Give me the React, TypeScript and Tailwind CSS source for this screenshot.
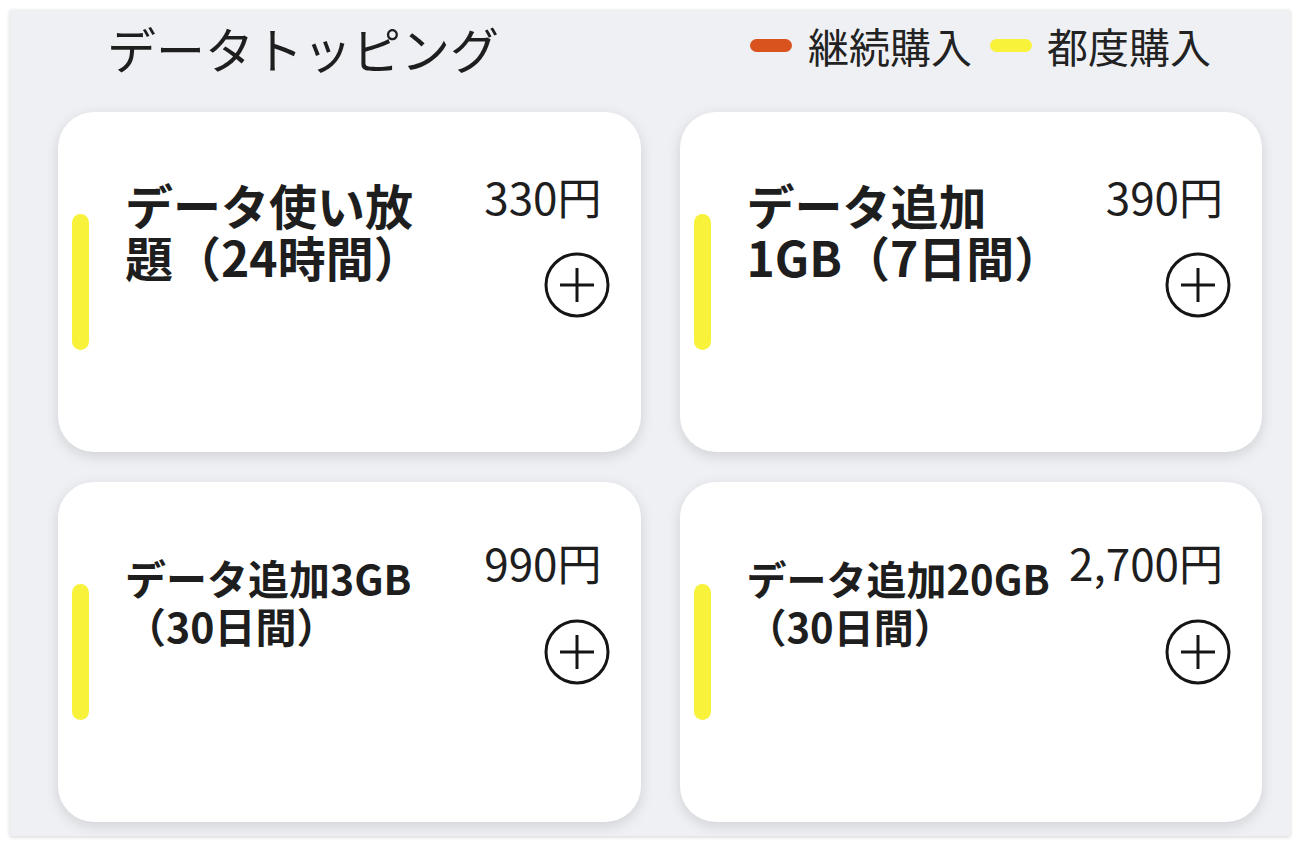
import React from "react";

type Topping = {
  lines: string[];
  price: string;
  size: "lg" | "sm";
  tight?: boolean;
};

const toppings: Topping[] = [
  { lines: ["データ使い放", "題（24時間）"], price: "330円", size: "lg" },
  { lines: ["データ追加", "1GB（7日間）"], price: "390円", size: "lg" },
  { lines: ["データ追加3GB", "（30日間）"], price: "990円", size: "sm" },
  { lines: ["データ追加20GB", "（30日間）"], price: "2,700円", size: "sm", tight: true },
];

function PlusCircle() {
  return (
    <svg width="66" height="66" viewBox="0 0 66 66" fill="none" stroke="#151515" strokeWidth="3">
      <circle cx="33" cy="33" r="31" />
      <line x1="16" y1="33" x2="50" y2="33" />
      <line x1="33" y1="16" x2="33" y2="50" />
    </svg>
  );
}

function ToppingCard({ item }: { item: Topping }) {
  const lg = item.size === "lg";
  let titleCls = "ml-[36px] flex-1 mt-[7px] text-[48px] leading-[52px] font-bold text-[#1e1e1e] whitespace-nowrap";
  if (!lg) {
    titleCls = item.tight
      ? "ml-[36px] flex-1 mt-[13px] text-[40px] leading-[48px] font-bold text-[#1e1e1e] whitespace-nowrap"
      : "ml-[36px] flex-1 mt-[12px] text-[41px] leading-[48px] font-bold text-[#1e1e1e] whitespace-nowrap";
  }
  return (
    <div className="flex items-start h-[340px] rounded-[36px] bg-white shadow-[0_4px_14px_rgba(0,0,0,0.13)] pl-[14px] pr-[31px] pt-[59px]">
      <div className="mt-[43px] w-[17px] h-[136px] rounded-full bg-[#f8f23a] shrink-0" />
      <p className={titleCls}>
        {item.lines[0]}
        <br />
        {item.lines[1]}
      </p>
      <div className={lg ? "flex flex-col items-end mt-[1px]" : "flex flex-col items-end mt-[-3px]"}>
        <div className="mr-[8px] text-[44px] leading-[48px] text-[#1e1e1e]">{item.price}</div>
        <div className={lg ? "mt-[32px]" : "mt-[33px]"}>
          <PlusCircle />
        </div>
      </div>
    </div>
  );
}

export default function App() {
  return (
    <div className="w-[1300px] h-[846px] bg-white p-[10px] font-['Noto_Sans_CJK_JP','Noto_Sans',sans-serif]">
      <div className="h-full bg-[#eef0f4] shadow-[0_1px_4px_rgba(0,0,0,0.18)] pl-[48px] pr-[28px]">
        <div className="h-[102px] flex items-start justify-between">
          <h1 className="ml-[49px] mt-[10px] text-[49px] leading-[56px] font-normal text-[#1e1e1e]">
            データトッピング
          </h1>
          <div className="mr-[51px] mt-[11px] flex items-center text-[41px] leading-[48px] text-[#222]">
            <span className="w-[42px] h-[13px] rounded-full bg-[#d9531f]" />
            <span className="ml-[16px]">継続購入</span>
            <span className="ml-[18px] w-[42px] h-[13px] rounded-full bg-[#f8f23a]" />
            <span className="ml-[15px]">都度購入</span>
          </div>
        </div>
        <div className="grid grid-cols-2 gap-x-[39px] gap-y-[30px]">
          {toppings.map((t) => (
            <ToppingCard key={t.price} item={t} />
          ))}
        </div>
      </div>
    </div>
  );
}
